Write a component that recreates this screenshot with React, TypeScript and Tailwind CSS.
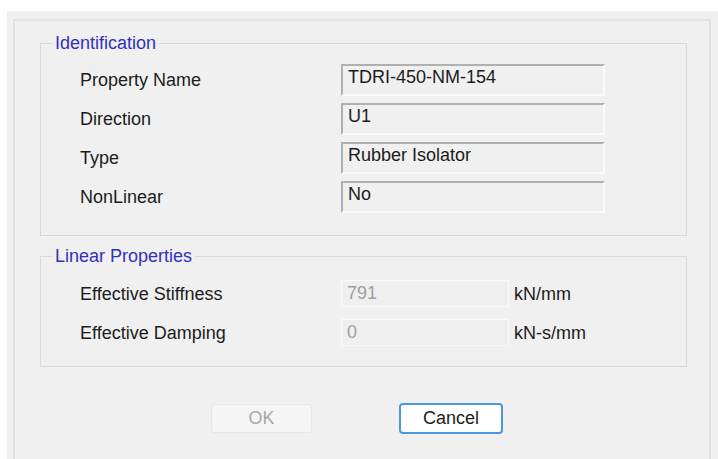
import React from 'react';

type Field = { label: string; value: string };

const idFields: Field[] = [
  { label: 'Property Name', value: 'TDRI-450-NM-154' },
  { label: 'Direction', value: 'U1' },
  { label: 'Type', value: 'Rubber Isolator' },
  { label: 'NonLinear', value: 'No' },
];

const linearFields = [
  { label: 'Effective Stiffness', value: '791', unit: 'kN/mm' },
  { label: 'Effective Damping', value: '0', unit: 'kN-s/mm' },
];

// Windows-style group box with the caption sitting on the top border
const GroupBox: React.FC<{ title: string; className?: string; children: React.ReactNode }> = ({
  title,
  className = '',
  children,
}) => (
  <div className={`relative border border-[#dadada] ${className}`}>
    <span className="absolute left-[11px] top-[-11px] bg-[#f0f0f0] px-[3px] leading-[20px] text-[#3030c0]">
      {title}
    </span>
    {children}
  </div>
);

export default function App() {
  return (
    <div
      className="h-[459px] w-[718px] overflow-hidden bg-white pl-[7px] pt-[11px] text-[18px] text-[#1c1c1c]"
      style={{ fontFamily: '"Liberation Sans", Arial, sans-serif' }}
    >
      <div className="h-[448px] bg-[#f0f0f0] pl-[6px] pr-[7px] pt-[8px]">
        <div className="h-[460px] border-l-2 border-r-2 border-t-2 border-[#e3e3e3] pl-[25px] pr-[22px] pt-[22px]">
          {/* Identification */}
          <GroupBox title="Identification" className="pb-[22px] pl-[39px] pt-[20px]">
            <div className="flex flex-col gap-[7px]">
              {idFields.map((f) => (
                <div key={f.label} className="flex h-[32px] items-center">
                  <div className="w-[261px] pt-[1px]">{f.label}</div>
                  <div className="h-[32px] w-[264px] border-b-2 border-l-2 border-r-2 border-t-2 border-b-[#fbfbfb] border-l-[#b0b0b0] border-r-[#fbfbfb] border-t-[#b0b0b0] pl-[5px] pt-[1px] leading-[21px]">
                    {f.value}
                  </div>
                </div>
              ))}
            </div>
          </GroupBox>

          {/* Linear Properties */}
          <GroupBox title="Linear Properties" className="mt-[20px] pb-[20px] pl-[39px] pt-[23px]">
            <div className="flex flex-col gap-[12px]">
              {linearFields.map((f) => (
                <div key={f.label} className="flex h-[27px] items-center">
                  <div className="w-[261px] pt-[1px]">{f.label}</div>
                  <div className="flex h-[27px] w-[168px] items-center border border-[#f9f9f9] bg-[#efefef] pl-[5px] text-[#a0a0a0]">
                    {f.value}
                  </div>
                  <div className="ml-[5px] pt-[1px]">{f.unit}</div>
                </div>
              ))}
            </div>
          </GroupBox>

          {/* Buttons */}
          <div className="mt-[36px] flex items-center">
            <button
              disabled
              className="ml-[171px] flex h-[29px] w-[101px] items-center justify-center rounded-[3px] border border-[#e6e6e6] bg-[#f5f5f5] text-[#a8a8a8]"
            >
              OK
            </button>
            <button className="ml-[87px] flex h-[31px] w-[104px] items-center justify-center rounded-[4px] border-2 border-[#4a98de] bg-white text-[#1c1c1c]">
              Cancel
            </button>
          </div>
        </div>
      </div>
    </div>
  );
}
